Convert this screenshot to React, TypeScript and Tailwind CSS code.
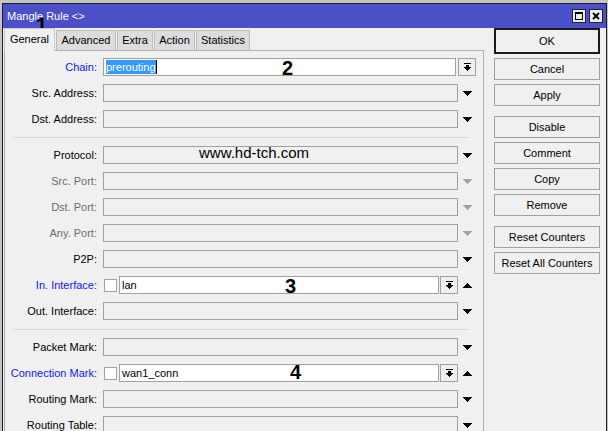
import type { ReactNode } from 'react'

type Tone = 'normal' | 'muted' | 'link'

const toneClass: Record<Tone, string> = {
  normal: 'text-black',
  muted: 'text-[#6d6d6d]',
  link: 'text-[#1515f0]',
}

function Tri({ up = false, muted = false }: { up?: boolean; muted?: boolean }) {
  const fill = muted ? '#a3a3a3' : '#000'
  const rows = [9, 7, 5, 3, 1]
  return (
    <svg width="9" height="5" viewBox="0 0 9 5" shapeRendering="crispEdges">
      {rows.map((w, i) => (
        <rect key={i} x={(9 - w) / 2} y={up ? 4 - i : i} width={w} height="1" fill={fill} />
      ))}
    </svg>
  )
}

function DropIcon() {
  return (
    <svg width="7" height="8" viewBox="0 0 7 8" shapeRendering="crispEdges">
      <rect x="0" y="0" width="7" height="1" fill="#000" />
      <rect x="2" y="2" width="3" height="2" fill="#000" />
      <rect x="0" y="4" width="7" height="1" fill="#000" />
      <rect x="1" y="5" width="5" height="1" fill="#000" />
      <rect x="2" y="6" width="3" height="1" fill="#000" />
      <rect x="3" y="7" width="1" height="1" fill="#000" />
    </svg>
  )
}

function DropButton() {
  return (
    <div className="flex h-[18px] w-[18px] items-center justify-center border border-[#a0a0a0] bg-[#f0f0f0]">
      <DropIcon />
    </div>
  )
}

function Row({ label, tone = 'normal', children }: { label: string; tone?: Tone; children: ReactNode }) {
  return (
    <div className="flex h-[26px] items-center">
      <div className={`mr-[6px] w-[92px] text-right ${toneClass[tone]}`}>{label}:</div>
      {children}
    </div>
  )
}

function Field({ muted = false, up = false }: { muted?: boolean; up?: boolean }) {
  return (
    <>
      <div className="h-[18px] flex-1 border border-[#a0a0a0] bg-[#f0f0f0]" />
      <div className="flex w-[19px] justify-center">
        <Tri muted={muted} up={up} />
      </div>
    </>
  )
}

function CheckField({ value }: { value: string }) {
  return (
    <>
      <div className="ml-px h-[13px] w-[13px] border border-[#a0a0a0] bg-white" />
      <div className="ml-[2px] flex h-[18px] flex-1 items-center border border-[#a0a0a0] bg-white pl-[2px]">
        {value}
      </div>
      <div className="ml-px">
        <DropButton />
      </div>
      <div className="flex w-[19px] justify-center">
        <Tri up />
      </div>
    </>
  )
}

function Sep() {
  return (
    <div className="flex h-[10px] items-center px-[8px]">
      <div className="h-px flex-1 bg-[#dadada]" />
    </div>
  )
}

const tabs = [
  { name: 'Advanced', w: 'w-[60px]' },
  { name: 'Extra', w: 'w-[36px]' },
  { name: 'Action', w: 'w-[41px]' },
  { name: 'Statistics', w: 'w-[54px]' },
]

function Btn({ children, primary = false }: { children: ReactNode; primary?: boolean }) {
  return (
    <div
      className={`flex items-center justify-center bg-[#f0f0f0] ${
        primary ? 'h-[26px] border-2 border-[#1a1a1a]' : 'h-[22px] border border-[#a0a0a0]'
      }`}
    >
      {children}
    </div>
  )
}

function Mark({ n, className }: { n: string; className: string }) {
  return <div className={`absolute text-[20px] font-bold leading-[20px] text-black ${className}`}>{n}</div>
}

export default function App() {
  return (
    <div className="h-[431px] w-[608px] overflow-hidden bg-[#c4c4c4] pl-[2px] pr-px pt-[3px] font-['Liberation_Sans',Arial,sans-serif] text-[11px] text-black">
      <div className="relative flex h-[428px] flex-col border-x border-t border-[#1e1e1e] bg-[#f0f0f0]">
        {/* title bar */}
        <div className="flex h-[24px] items-center justify-between bg-[#4c50c8] pl-[4px] pr-[3px]">
          <span className="text-[11px] text-white">Mangle Rule &lt;&gt;</span>
          <div className="flex gap-[3px]">
            <div className="flex h-[14px] w-[14px] items-center justify-center border border-[#222] bg-[#ececec]">
              <div className="h-[8px] w-[8px] border border-t-2 border-black" />
            </div>
            <div className="flex h-[14px] w-[14px] items-center justify-center border border-[#222] bg-[#ececec]">
              <svg width="8" height="8" viewBox="0 0 8 8">
                <path d="M1 1 L7 7 M7 1 L1 7" stroke="#000" strokeWidth="1.8" />
              </svg>
            </div>
          </div>
        </div>

        <div className="flex min-h-0 flex-1 pl-px">
          {/* left: tabs + panel */}
          <div className="flex w-[480px] flex-col">
            <div className="flex h-[23px] items-end gap-px">
              <div className="relative z-10 -mb-px flex h-[23px] w-[51px] items-center justify-center border-x border-t border-[#c8c8c8] bg-[#f0f0f0] pb-[2px]">
                General
              </div>
              {tabs.map((t) => (
                <div
                  key={t.name}
                  className={`flex h-[20px] items-center justify-center border-x border-t border-[#bcbcbc] bg-[#dcdcdc] ${t.w}`}
                >
                  {t.name}
                </div>
              ))}
            </div>
            <div className="flex-1 border-x border-t border-[#b0b0b0] pr-[6px] pt-[3px]">
              <Row label="Chain" tone="link">
                <div className="flex h-[18px] flex-1 items-center border border-[#a0a0a0] bg-white pl-[2px]">
                  <span className="bg-[#3399ff] leading-[14px] text-white">prerouting</span>
                  <span className="h-[14px] w-px bg-black" />
                </div>
                <div className="ml-[2px] mr-px">
                  <DropButton />
                </div>
              </Row>
              <Row label="Src. Address">
                <Field />
              </Row>
              <Row label="Dst. Address">
                <Field />
              </Row>
              <Sep />
              <Row label="Protocol">
                <Field />
              </Row>
              <Row label="Src. Port" tone="muted">
                <Field muted />
              </Row>
              <Row label="Dst. Port" tone="muted">
                <Field muted />
              </Row>
              <Row label="Any. Port" tone="muted">
                <Field muted />
              </Row>
              <Row label="P2P">
                <Field />
              </Row>
              <Row label="In. Interface" tone="link">
                <CheckField value="lan" />
              </Row>
              <Row label="Out. Interface">
                <Field />
              </Row>
              <Sep />
              <Row label="Packet Mark">
                <Field />
              </Row>
              <Row label="Connection Mark" tone="link">
                <CheckField value="wan1_conn" />
              </Row>
              <Row label="Routing Mark">
                <Field />
              </Row>
              <Row label="Routing Table">
                <Field />
              </Row>
            </div>
          </div>

          {/* right: buttons */}
          <div className="ml-[10px] flex w-[106px] flex-col">
            <div className="flex flex-col gap-[4px]">
              <Btn primary>OK</Btn>
              <Btn>Cancel</Btn>
              <Btn>Apply</Btn>
            </div>
            <div className="mt-[10px] flex flex-col gap-[4px]">
              <Btn>Disable</Btn>
              <Btn>Comment</Btn>
              <Btn>Copy</Btn>
              <Btn>Remove</Btn>
            </div>
            <div className="mt-[10px] flex flex-col gap-[4px]">
              <Btn>Reset Counters</Btn>
              <Btn>Reset All Counters</Btn>
            </div>
          </div>
        </div>

        {/* annotations drawn over the dialog */}
        <Mark n="1" className="left-[33px] top-[11px]" />
        <Mark n="2" className="left-[279px] top-[54px]" />
        <Mark n="3" className="left-[282px] top-[272px]" />
        <Mark n="4" className="left-[287px] top-[358px]" />
        <div className="absolute left-[196px] top-[141px] text-[15px] leading-[15px] text-black">www.hd-tch.com</div>
      </div>
    </div>
  )
}
